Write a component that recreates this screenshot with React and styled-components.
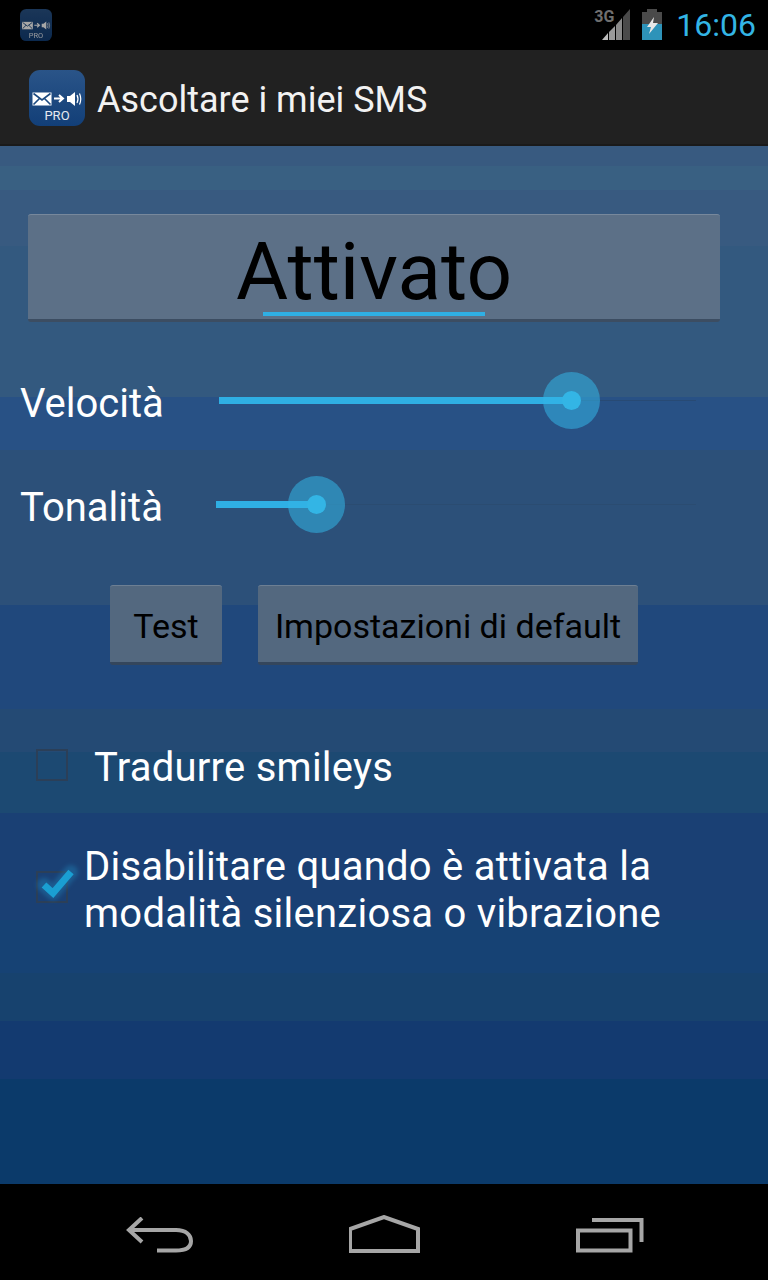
import React from 'react'
import styled, { createGlobalStyle } from 'styled-components'

const BANDS = [
    ['#385a80', 20],
    ['#396082', 24],
    ['#385a80', 56],
    ['#33597f', 151],
    ['#285185', 53],
    ['#2c5079', 155],
    ['#20487c', 104],
    ['#244a74', 43],
    ['#1c4972', 61],
    ['#1a4074', 107],
    ['#164274', 53],
    ['#17426e', 48],
    ['#133a70', 58],
    ['#0b3a6a', 105],
]

function bandGradient() {
    let y = 0
    const stops = BANDS.map(([colour, height]) => {
        const stop = `${colour} ${y}px ${y + height}px`
        y += height
        return stop
    })
    return `linear-gradient(${stops.join(', ')})`
}

export default function App() {
    return (
        <Phone>
            <GlobalStyle />
            <StatusBar>
                <AppIcon size={32} dim />
                <StatusRight>
                    <SignalIcon />
                    <BatteryIcon />
                    <Clock>16:06</Clock>
                </StatusRight>
            </StatusBar>
            <ActionBar>
                <AppIcon size={56} />
                <Title>Ascoltare i miei SMS</Title>
            </ActionBar>
            <Content style={{ backgroundImage: bandGradient() }}>
                <ToggleButton>
                    Attivato
                    <ToggleLine />
                </ToggleButton>
                <SliderRow>
                    <SliderLabel>Velocità</SliderLabel>
                    <Slider value={352} track={477} start={11} />
                </SliderRow>
                <SliderRow second>
                    <SliderLabel>Tonalità</SliderLabel>
                    <Slider value={100} track={480} start={8} faint />
                </SliderRow>
                <ButtonRow>
                    <Button width={112}>Test</Button>
                    <Button width={380}>Impostazioni di default</Button>
                </ButtonRow>
                <CheckRow>
                    <CheckBox />
                    <SmileyLabel>Tradurre smileys</SmileyLabel>
                </CheckRow>
                <CheckRow second>
                    <CheckBox>
                        <CheckMark />
                    </CheckBox>
                    <CheckLabel>Disabilitare quando è attivata la<br />modalità silenziosa o vibrazione</CheckLabel>
                </CheckRow>
            </Content>
            <NavBar>
                <NavIcon width="68" height="36" viewBox="0 0 68 36">
                    <path d="M16 1 L3 13 L16 25 M3 13 H50 C60 13 65 18 65 24 C65 30 60 33.5 50 33.5 H31" />
                </NavIcon>
                <NavIcon width="72" height="40" viewBox="0 0 72 40">
                    <path d="M1 36 V14 L35 2 L69 14 V36 Z" />
                </NavIcon>
                <NavIcon width="68" height="36" viewBox="0 0 68 36">
                    <path d="M16 3 H65.5 V25 M2 13.5 H54.5 V33.5 H2 Z" />
                </NavIcon>
            </NavBar>
        </Phone>
    )
}

function AppIcon({ size, dim }) {
    return (
        <IconSvg width={size} height={size} viewBox="0 0 56 56" dim={dim}>
            <defs>
                <linearGradient id={`tile${size}`} x1="0" y1="0" x2="0" y2="1">
                    <stop offset="0" stopColor="#2a5488" />
                    <stop offset="1" stopColor="#123f78" />
                </linearGradient>
            </defs>
            <rect width="56" height="56" rx="11" fill={`url(#tile${size})`} />
            <rect x="3.5" y="22.5" width="19" height="13" fill="#fff" />
            <path d="M4.5 23.5 L13 30 L21.5 23.5 M4.5 34.5 L10.5 28.5 M21.5 34.5 L15.5 28.5" fill="none" stroke="#1c4a80" strokeWidth="1.6" />
            <path d="M25 28.5 H33 M30 25 L34 28.5 L30 32" fill="none" stroke="#fff" strokeWidth="2" />
            <path d="M38 26 H41 L46 22 V36 L41 32 H38 Z" fill="#fff" />
            <path d="M48 25 Q50 29 48 33 M50.5 23.5 Q53 29 50.5 34.5" fill="none" stroke="#fff" strokeWidth="1.2" />
            <IconText x="28" y="50">PRO</IconText>
        </IconSvg>
    )
}

function SignalIcon() {
    return (
        <SignalWrap>
            <NetworkType>3G</NetworkType>
            <svg width="28" height="32" viewBox="0 0 28 32">
                <path d="M0 31 L6 31 L6 24 Z" fill="#bdbdbd" />
                <path d="M7 31 H13 V17 L7 23 Z" fill="#9a9a9a" />
                <path d="M14 31 H20 V9 L14 16 Z" fill="#8a8a8a" />
                <path d="M21 31 H28 V0 L21 8 Z" fill="#4a4a4a" />
            </svg>
        </SignalWrap>
    )
}

function BatteryIcon() {
    return (
        <svg width="20" height="32" viewBox="0 0 20 32">
            <rect x="5" y="0" width="10" height="3" fill="#4a4a4a" />
            <rect x="0" y="3" width="20" height="12" fill="#4a4a4a" />
            <rect x="0" y="15" width="20" height="16" fill="#2e93b9" />
            <path d="M12 8 L5 18 H9 L7 25 L16 14 H11 Z" fill="#e8e8e8" />
        </svg>
    )
}

function Slider({ value, track, start, faint }) {
    return (
        <SliderTrack track={track} start={start} faint={faint}>
            <SliderFill style={{ width: value }} />
            <SliderThumb style={{ left: value }} />
        </SliderTrack>
    )
}

const GlobalStyle = createGlobalStyle`
    html, body {
        margin: 0;
        padding: 0;
        background: #000;
    }
`

const Phone = styled.div`
    width: 768px;
    height: 1280px;
    display: flex;
    flex-direction: column;
    overflow: hidden;
    font-family: Roboto, "Liberation Sans", sans-serif;
`

const StatusBar = styled.div`
    height: 50px;
    flex: none;
    background: #000;
    display: flex;
    align-items: center;
    justify-content: space-between;
    padding: 0 12px 0 20px;
`

const StatusRight = styled.div`
    display: flex;
    align-items: center;
`

const SignalWrap = styled.div`
    position: relative;
    width: 28px;
    height: 32px;
    margin-right: 12px;
`

const NetworkType = styled.span`
    position: absolute;
    left: -8px;
    top: -1px;
    font-size: 16px;
    line-height: 18px;
    font-weight: 700;
    color: #6f6f6f;
`

const Clock = styled.span`
    margin-left: 14px;
    font-size: 32px;
    line-height: 50px;
    color: #33b5e5;
`

const IconSvg = styled.svg`
    display: block;
    flex: none;
    opacity: ${(props) => (props.dim ? 0.65 : 1)};
`

const IconText = styled.text`
    font-size: 13px;
    fill: #e4e9f0;
    text-anchor: middle;
    font-family: Roboto, sans-serif;
`

const ActionBar = styled.div`
    height: 96px;
    flex: none;
    box-sizing: border-box;
    background: #212121;
    border-bottom: 2px solid #1a1a1a;
    display: flex;
    align-items: center;
    padding: 2px 0 0 29px;
`

const Title = styled.h1`
    margin: 4px 0 0 12px;
    font-size: 36px;
    font-weight: 400;
    color: #f2f2f2;
    white-space: nowrap;
`

const Content = styled.main`
    flex: 1;
    display: flex;
    flex-direction: column;
    padding: 68px 48px 0 28px;
`

const ToggleButton = styled.div`
    position: relative;
    height: 108px;
    box-sizing: border-box;
    background: #5c7087;
    border-top: 1px solid #77889c;
    border-bottom: 3px solid #3c4d62;
    border-radius: 3px;
    text-align: center;
    font-size: 80px;
    line-height: 114px;
    color: #000;
`

const ToggleLine = styled.span`
    position: absolute;
    left: 235px;
    bottom: 3px;
    width: 222px;
    height: 4px;
    background: #2fafe4;
`

const SliderRow = styled.div`
    display: flex;
    align-items: center;
    height: 64px;
    margin: ${(props) => (props.second ? '40px' : '49px')} 0 0 -8px;
`

const SliderLabel = styled.span`
    width: 160px;
    flex: none;
    font-size: 40px;
    color: #fff;
`

const SliderTrack = styled.div`
    position: relative;
    width: ${(props) => props.track}px;
    height: 1px;
    margin-left: ${(props) => props.start + 28}px;
    margin-bottom: 5px;
    background: rgba(40, 50, 60, ${(props) => (props.faint ? 0.12 : 0.22)});
`

const SliderFill = styled.div`
    position: absolute;
    left: 0;
    top: -3px;
    height: 7px;
    background: #2fafe4;
`

const SliderThumb = styled.div`
    position: absolute;
    top: -28px;
    width: 57px;
    height: 57px;
    margin-left: -28px;
    border-radius: 50%;
    background: rgba(51, 181, 229, 0.55);
    &::after {
        content: '';
        position: absolute;
        left: 19px;
        top: 19px;
        width: 19px;
        height: 19px;
        border-radius: 50%;
        background: #33b5e5;
    }
`

const ButtonRow = styled.div`
    display: flex;
    justify-content: center;
    gap: 36px;
    margin: 46px 0 0;
`

const Button = styled.div`
    width: ${(props) => props.width}px;
    height: 80px;
    box-sizing: border-box;
    background: #53687f;
    border-top: 1px solid #6d7f93;
    border-bottom: 3px solid #34465c;
    border-radius: 3px;
    text-align: center;
    font-size: 34px;
    line-height: 80px;
    color: #000;
    white-space: nowrap;
`

const CheckRow = styled.div`
    display: flex;
    align-items: center;
    margin: ${(props) => (props.second ? '52px' : '79px')} 0 0 8px;
`

const CheckBox = styled.div`
    position: relative;
    width: 32px;
    height: 32px;
    flex: none;
    box-sizing: border-box;
    margin-top: -6px;
    border: 2px solid #2b3f58;
`

const CheckGlow = styled.svg`
    position: absolute;
    left: -4px;
    top: -12px;
    overflow: visible;
`

const GlowStroke = styled.path`
    fill: none;
    stroke: #1f78ad;
    stroke-width: 14;
    stroke-linecap: round;
    stroke-linejoin: round;
    opacity: 0.5;
    filter: blur(2px);
`

function CheckMark() {
    return (
        <CheckGlow width="44" height="44" viewBox="0 0 44 44">
            <GlowStroke d="M10 24 L19 32 L37 11" />
            <path d="M10 24 L19 32 L37 11" fill="none" stroke="#1a9fd2" strokeWidth="7" />
        </CheckGlow>
    )
}

const SmileyLabel = styled.span`
    margin-left: 26px;
    font-size: 40px;
    line-height: 47px;
    letter-spacing: 0.25px;
    color: #fff;
`

const CheckLabel = styled.span`
    margin-left: 16px;
    font-size: 40px;
    line-height: 47px;
    letter-spacing: 0.25px;
    color: #fff;
`

const NavBar = styled.nav`
    height: 96px;
    flex: none;
    box-sizing: border-box;
    background: #000;
    display: flex;
    align-items: center;
    justify-content: space-between;
    padding: 5px 124px 0 126px;
`

const NavIcon = styled.svg`
    display: block;
    fill: none;
    stroke: #a6a6a6;
    stroke-width: 4;
`
